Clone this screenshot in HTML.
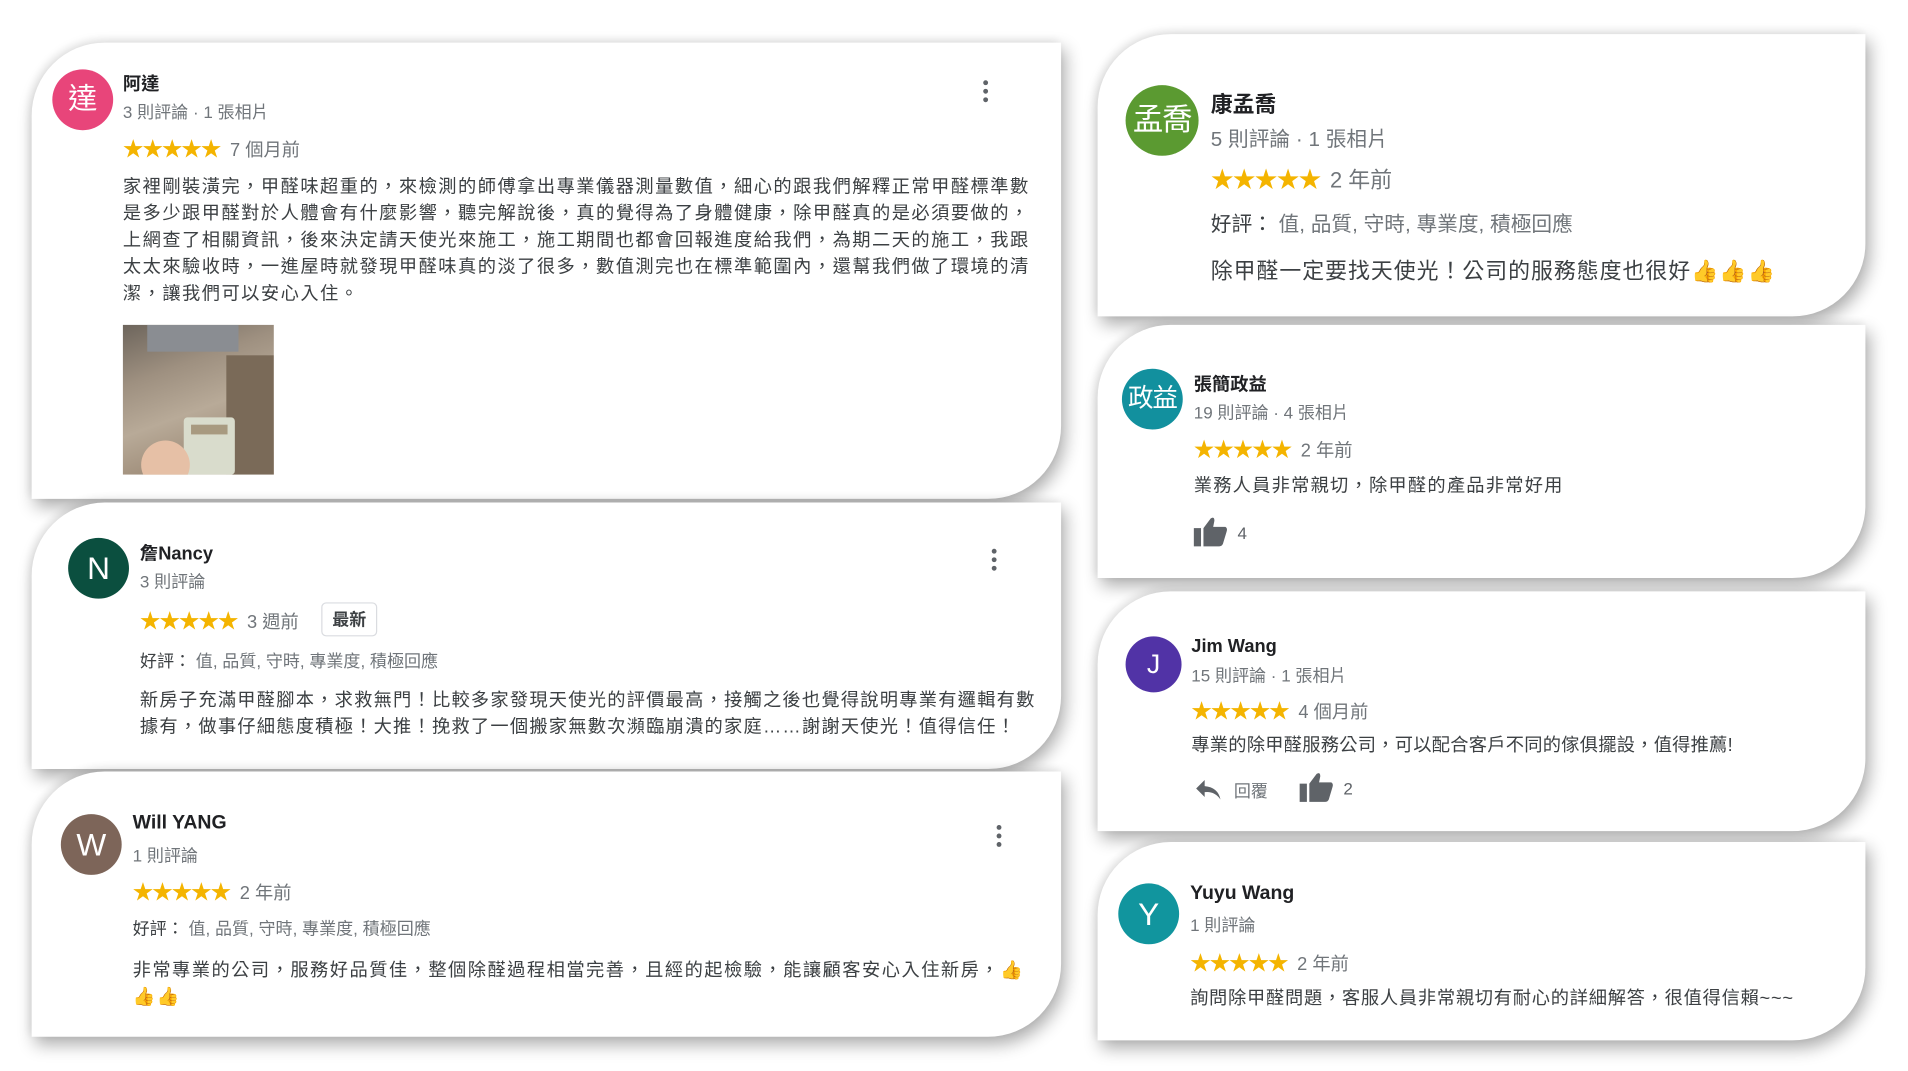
<!DOCTYPE html>
<html><head><meta charset="utf-8">
<style>
html,body{margin:0;padding:0;width:1908px;height:1070px;overflow:hidden;background:#fff;}
#w{position:absolute;left:0;top:0;width:1568px;height:880px;transform:scale(1.21684);transform-origin:0 0;font-family:"Liberation Sans","Noto Sans CJK TC",sans-serif;color:#222;}
.card{position:absolute;background:#fff;border-radius:60px 0 60px 0;box-shadow:3px 6px 14px rgba(0,0,0,0.33),-2px -2px 8px rgba(0,0,0,0.08);}
.a{position:absolute;white-space:nowrap;}
.av{position:absolute;border-radius:50%;color:#fff;text-align:center;font-family:"Liberation Sans","Noto Sans CJK TC",sans-serif;}
.nm{font-weight:bold;font-size:15px;color:#202124;}
.mt{font-size:14px;color:#70757a;}
.st{color:#f4b400;font-size:17px;letter-spacing:-1px;}
.tm{font-size:15px;color:#70757a;margin-left:8px;letter-spacing:0;}
.tx{font-size:15px;color:#3c4043;line-height:22px;}
.dots{position:absolute;width:4px;}
.dots i{display:block;width:4px;height:4px;border-radius:50%;background:#5f6368;margin-bottom:3px;}
</style></head><body><div id="w">

<!-- Card A -->
<div class="card" style="left:26px;top:35px;width:846px;height:375px;"></div>
<div class="av" style="left:43px;top:57px;width:50px;height:50px;background:#e8457a;font-size:24px;line-height:50px;">達</div>
<div class="a nm" style="left:101px;top:58px;">阿達</div>
<div class="a mt" style="left:101px;top:82px;">3 則評論 · 1 張相片</div>
<div class="a st" style="left:101px;top:108px;">★★★★★<span class="tm">7 個月前</span></div>
<div class="a tx" style="left:101px;top:143px;letter-spacing:1.2px;">家裡剛裝潢完，甲醛味超重的，來檢測的師傅拿出專業儀器測量數值，細心的跟我們解釋正常甲醛標準數<br>是多少跟甲醛對於人體會有什麼影響，聽完解說後，真的覺得為了身體健康，除甲醛真的是必須要做的，<br>上網查了相關資訊，後來決定請天使光來施工，施工期間也都會回報進度給我們，為期二天的施工，我跟<br>太太來驗收時，一進屋時就發現甲醛味真的淡了很多，數值測完也在標準範圍內，還幫我們做了環境的清<br>潔，讓我們可以安心入住。</div>
<div class="a" style="left:101px;top:267px;width:124px;height:123px;background:linear-gradient(160deg,#6d655c 0%,#9e9080 30%,#b8aa98 55%,#8a7560 100%);overflow:hidden;">
 <div style="position:absolute;left:20px;top:0;width:75px;height:22px;background:#8a8d92;"></div>
 <div style="position:absolute;left:85px;top:25px;width:39px;height:98px;background:#7a6a58;"></div>
 <div style="position:absolute;left:50px;top:76px;width:42px;height:47px;background:#d9dccc;border-radius:3px;"></div>
 <div style="position:absolute;left:56px;top:82px;width:30px;height:8px;background:#a89a80;"></div>
 <div style="position:absolute;left:15px;top:95px;width:40px;height:40px;background:#e6c0a6;border-radius:50%;"></div>
</div>
<div class="dots" style="left:808px;top:66px;"><i></i><i></i><i></i></div>

<!-- Card B -->
<div class="card" style="left:26px;top:413px;width:846px;height:219px;"></div>
<div class="av" style="left:56px;top:442px;width:50px;height:50px;background:#0b4f3f;font-size:26px;line-height:50px;">N</div>
<div class="a nm" style="left:115px;top:444px;">詹Nancy</div>
<div class="a mt" style="left:115px;top:468px;">3 則評論</div>
<div class="a st" style="left:115px;top:496px;">★★★★★<span class="tm">3 週前</span></div>
<div class="a" style="left:264px;top:495px;width:44px;height:26px;border:1px solid #dadce0;border-radius:4px;font-size:14px;font-weight:bold;line-height:26px;text-align:center;color:#3c4043;">最新</div>
<div class="a" style="left:115px;top:533px;font-size:14px;color:#70757a;"><b style="color:#3c4043;font-weight:normal;">好評：</b> 值, 品質, 守時, 專業度, 積極回應</div>
<div class="a tx" style="left:115px;top:565px;letter-spacing:1px;">新房子充滿甲醛腳本，求救無門！比較多家發現天使光的評價最高，接觸之後也覺得說明專業有邏輯有數<br>據有，做事仔細態度積極！大推！挽救了一個搬家無數次瀕臨崩潰的家庭……謝謝天使光！值得信任！</div>
<div class="dots" style="left:815px;top:451px;"><i></i><i></i><i></i></div>

<!-- Card C -->
<div class="card" style="left:26px;top:634px;width:846px;height:218px;"></div>
<div class="av" style="left:50px;top:669px;width:50px;height:50px;background:#7d6559;font-size:26px;line-height:50px;">W</div>
<div class="a nm" style="left:109px;top:668px;font-size:16px;">Will YANG</div>
<div class="a mt" style="left:109px;top:693px;">1 則評論</div>
<div class="a st" style="left:109px;top:719px;">★★★★★<span class="tm">2 年前</span></div>
<div class="a" style="left:109px;top:753px;font-size:14px;color:#70757a;"><span style="color:#3c4043;">好評：</span> 值, 品質, 守時, 專業度, 積極回應</div>
<div class="a tx" style="left:109px;top:787px;letter-spacing:1.2px;">非常專業的公司，服務好品質佳，整個除醛過程相當完善，且經的起檢驗，能讓顧客安心入住新房，👍<br>👍👍</div>
<div class="dots" style="left:819px;top:678px;"><i></i><i></i><i></i></div>

<!-- Card D -->
<div class="card" style="left:902px;top:28px;width:631px;height:232px;"></div>
<div class="av" style="left:925px;top:70px;width:60px;height:58px;background:#5b9a31;font-size:25px;line-height:58px;letter-spacing:-1px;">孟喬</div>
<div class="a nm" style="left:995px;top:72px;font-size:18px;">康孟喬</div>
<div class="a mt" style="left:995px;top:100px;font-size:17px;">5 則評論 · 1 張相片</div>
<div class="a st" style="left:995px;top:133px;font-size:19px;">★★★★★<span class="tm" style="font-size:18px;">2 年前</span></div>
<div class="a" style="left:995px;top:170px;font-size:17px;color:#70757a;"><span style="color:#3c4043;">好評：</span> 值, 品質, 守時, 專業度, 積極回應</div>
<div class="a" style="left:995px;top:209px;font-size:18px;color:#3c4043;letter-spacing:0.8px;">除甲醛一定要找天使光！公司的服務態度也很好👍👍👍</div>

<!-- Card E -->
<div class="card" style="left:902px;top:267px;width:631px;height:208px;"></div>
<div class="av" style="left:922px;top:303px;width:50px;height:50px;background:#12909e;font-size:21px;line-height:50px;letter-spacing:-1px;">政益</div>
<div class="a nm" style="left:981px;top:305px;">張簡政益</div>
<div class="a mt" style="left:981px;top:329px;">19 則評論 · 4 張相片</div>
<div class="a st" style="left:981px;top:355px;">★★★★★<span class="tm">2 年前</span></div>
<div class="a tx" style="left:981px;top:389px;letter-spacing:1px;">業務人員非常親切，除甲醛的產品非常好用</div>
<svg class="a" style="left:981px;top:424px;" width="30" height="26" viewBox="0 0 30 26"><rect x="0" y="10" width="6" height="15" fill="#5f6368"/><path d="M8 10 L14 2 Q17 0 17 4 L16 9 L26 9 Q28 10 27 13 L24 23 Q23 25 21 25 L8 25 Z" fill="#5f6368"/></svg>
<div class="a" style="left:1017px;top:430px;font-size:14px;color:#5f6368;">4</div>

<!-- Card F -->
<div class="card" style="left:902px;top:486px;width:631px;height:197px;"></div>
<div class="av" style="left:925px;top:523px;width:46px;height:46px;background:#5133a6;font-size:22px;line-height:46px;">J</div>
<div class="a nm" style="left:979px;top:523px;">Jim Wang</div>
<div class="a mt" style="left:979px;top:545px;">15 則評論 · 1 張相片</div>
<div class="a st" style="left:979px;top:570px;">★★★★★<span class="tm">4 個月前</span></div>
<div class="a tx" style="left:979px;top:602px;letter-spacing:0.2px;">專業的除甲醛服務公司，可以配合客戶不同的傢俱擺設，值得推薦!</div>
<svg class="a" style="left:982px;top:640px;" width="22" height="18" viewBox="0 0 22 18"><path d="M8 1 L1 8 L8 15 L8 11 Q16 10 21 17 Q19 7 8 6 Z" fill="#5f6368"/></svg>
<div class="a" style="left:1014px;top:640px;font-size:14px;color:#70757a;">回覆</div>
<svg class="a" style="left:1068px;top:634px;" width="30" height="26" viewBox="0 0 30 26"><rect x="0" y="10" width="6" height="15" fill="#5f6368"/><path d="M8 10 L14 2 Q17 0 17 4 L16 9 L26 9 Q28 10 27 13 L24 23 Q23 25 21 25 L8 25 Z" fill="#5f6368"/></svg>
<div class="a" style="left:1104px;top:640px;font-size:14px;color:#5f6368;">2</div>

<!-- Card G -->
<div class="card" style="left:902px;top:692px;width:631px;height:163px;"></div>
<div class="av" style="left:919px;top:726px;width:50px;height:50px;background:#11959e;font-size:26px;line-height:50px;">Y</div>
<div class="a nm" style="left:978px;top:726px;font-size:16px;">Yuyu Wang</div>
<div class="a mt" style="left:978px;top:750px;">1 則評論</div>
<div class="a st" style="left:978px;top:777px;">★★★★★<span class="tm">2 年前</span></div>
<div class="a tx" style="left:978px;top:810px;letter-spacing:0.6px;">詢問除甲醛問題，客服人員非常親切有耐心的詳細解答，很值得信賴~~~</div>

</div></body></html>
